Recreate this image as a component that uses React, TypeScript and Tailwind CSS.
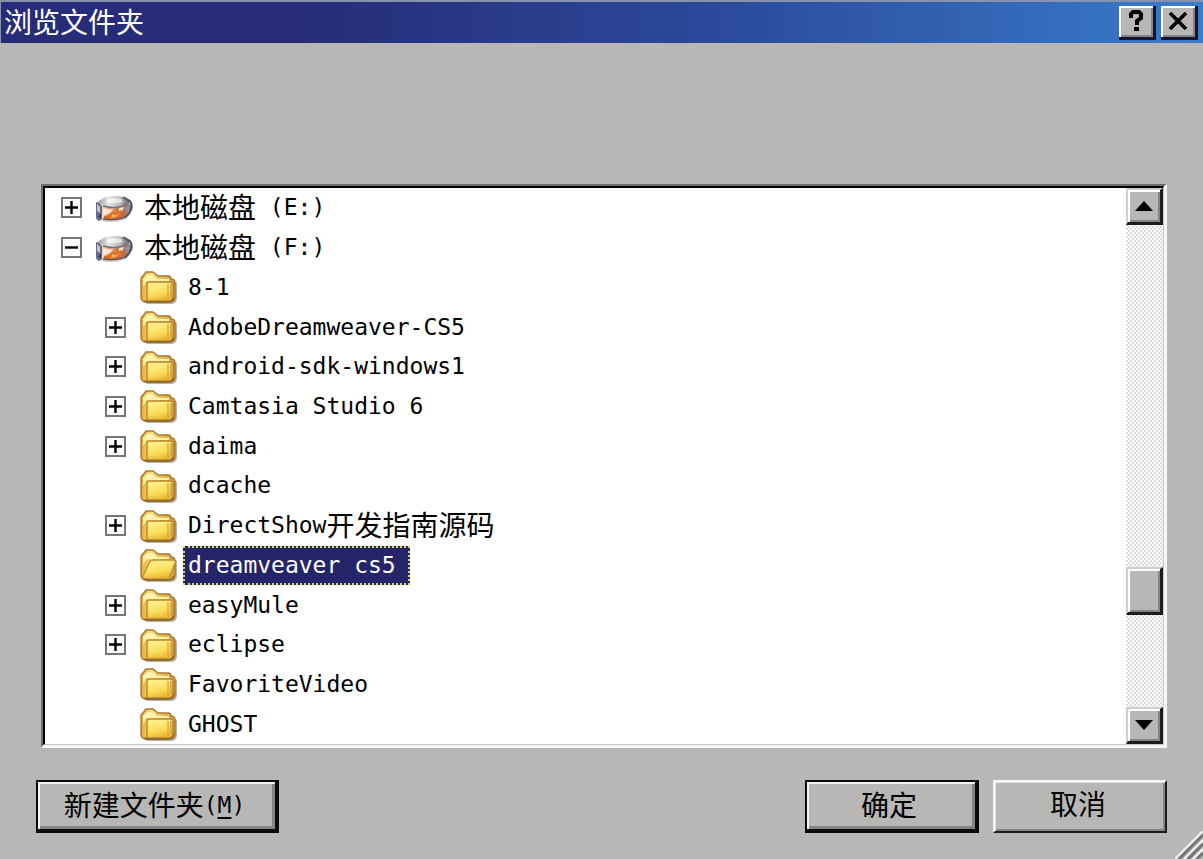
import React, { useState } from 'react';
import clsx from 'clsx';

type NodeKind = 'drive' | 'folder';

interface TreeNode {
  id: string;
  label: string;
  kind: NodeKind;
  level: 0 | 1;
  toggle?: 'plus' | 'minus';
}

const nodes: TreeNode[] = [
  { id: 'e', label: '本地磁盘 (E:)', kind: 'drive', level: 0, toggle: 'plus' },
  { id: 'f', label: '本地磁盘 (F:)', kind: 'drive', level: 0, toggle: 'minus' },
  { id: '8-1', label: '8-1', kind: 'folder', level: 1 },
  { id: 'adobe', label: 'AdobeDreamweaver-CS5', kind: 'folder', level: 1, toggle: 'plus' },
  { id: 'android', label: 'android-sdk-windows1', kind: 'folder', level: 1, toggle: 'plus' },
  { id: 'camtasia', label: 'Camtasia Studio 6', kind: 'folder', level: 1, toggle: 'plus' },
  { id: 'daima', label: 'daima', kind: 'folder', level: 1, toggle: 'plus' },
  { id: 'dcache', label: 'dcache', kind: 'folder', level: 1 },
  { id: 'directshow', label: 'DirectShow开发指南源码', kind: 'folder', level: 1, toggle: 'plus' },
  { id: 'dw', label: 'dreamveaver cs5', kind: 'folder', level: 1 },
  { id: 'easymule', label: 'easyMule', kind: 'folder', level: 1, toggle: 'plus' },
  { id: 'eclipse', label: 'eclipse', kind: 'folder', level: 1, toggle: 'plus' },
  { id: 'favorite', label: 'FavoriteVideo', kind: 'folder', level: 1 },
  { id: 'ghost', label: 'GHOST', kind: 'folder', level: 1 },
];

// Chinese glyphs are two latin cells wide, so the two scripts get their own size
const MixedText = ({ text }: { text: string }) => (
  <>
    {text.split(/([\u4e00-\u9fff]+)/).filter(Boolean).map((part, i) => (
      <span
        key={i}
        className={
          /[\u4e00-\u9fff]/.test(part)
            ? "pb-1 font-['Noto_Sans_CJK_SC',sans-serif] text-[28px] leading-none"
            : "font-['DejaVu_Sans_Mono',monospace] text-[23px] leading-none"
        }
      >
        {part}
      </span>
    ))}
  </>
);

const DriveIcon = () => (
  <svg width="38" height="34" viewBox="0 0 38 34" aria-hidden="true">
    <defs>
      <linearGradient id="driveTop" x1="0" y1="0" x2="1" y2="0">
        <stop offset="0" stopColor="#9a9aa0" />
        <stop offset=".35" stopColor="#e6e6e6" />
        <stop offset=".7" stopColor="#b8b8ba" />
        <stop offset="1" stopColor="#5c5c60" />
      </linearGradient>
      <linearGradient id="driveFront" x1="0" y1="0" x2="1" y2="0">
        <stop offset="0" stopColor="#f3d3b8" />
        <stop offset=".4" stopColor="#df8242" />
        <stop offset=".75" stopColor="#b86e48" />
        <stop offset="1" stopColor="#77758c" />
      </linearGradient>
    </defs>
    <path d="M3 27h23l10-6-5 7-8 3H8z" fill="#999" opacity=".4" />
    <path d="M6 15q10 4 20 1l11-4-1 8q-2 6-9 8l-19 1z" fill="url(#driveFront)" />
    <path d="M8 17q6 2 11 1l-4 4-7 3z" fill="#fff3e8" opacity=".8" />
    <path d="M9 25q4 0 8-4l4 1 6-3 2 2-5 5-8 3H9z" fill="#d96f22" />
    <path d="m17 23 4 1 4-2-4 4-5 1z" fill="#f7ab67" />
    <path d="M30 16l5-2-1 6-3 3z" fill="#8b8fab" />
    <path d="m24 17 5-1-1 3-4 1z" fill="#f7e4d8" />
    <path d="M2 11 10 6q9-2 18 0l7 4q0 3-7 5-10 2-18 1z" fill="url(#driveTop)" />
    <path d="M12 8q8-2 14 0l2 3q-7 2-16 1z" fill="#fff" opacity=".6" />
    <path d="M8 15q10 3 20 0l6-3" fill="none" stroke="#77727a" strokeWidth="1.4" />
    <path d="M28 6l7 4q3 4 1 9-2 5-7 8" fill="none" stroke="#55515c" strokeWidth="2" />
    <path d="M8 28q10 2 20-1" fill="none" stroke="#70504c" strokeWidth="1.4" />
    <path d="M1 11q4 1 6 4v13l-3 2q-3-1-3-4z" fill="#666a84" />
    <path d="M2 13l3 3v6l-3-2z" fill="#c2c5d8" />
    <path d="M3 25l3-2v5z" fill="#34365a" />
  </svg>
);

const FolderIcon = ({ open }: { open?: boolean }) => (
  <svg width="38" height="34" viewBox="0 0 38 34" aria-hidden="true">
    <defs>
      <linearGradient id="folderFront" x1="0" y1="0" x2=".3" y2="1">
        <stop offset="0" stopColor="#fff08c" />
        <stop offset=".3" stopColor="#fdeb82" />
        <stop offset=".7" stopColor="#fadb55" />
        <stop offset="1" stopColor="#e9b73a" />
      </linearGradient>
      <linearGradient id="folderBack" x1="0" y1="0" x2="1" y2="0">
        <stop offset="0" stopColor="#e2a838" />
        <stop offset=".3" stopColor="#f8e184" />
        <stop offset="1" stopColor="#d69b32" />
      </linearGradient>
    </defs>
    <path d="M5 31q1 3 4 3h22q7 0 7-6V13l-3-2v20z" fill="#777" opacity=".55" />
    <path
      d="M2 9q0-2 2-3l3-4h7l5 4h10q3 0 3 3 4 0 4 4v13q0 6-5 6H7q-5 0-5-5z"
      fill="url(#folderBack)"
      stroke="#a97a30"
      strokeWidth="1.4"
    />
    <path d="M4 9 8 5h5l5 4h12v2H9q-3 0-3 3l-2 3z" fill="#fdf2ae" />
    {open ? (
      <path
        d="M10 15q1-3 4-3h20q3 0 2 3l-5 13q-1 3-4 3H7q-4 0-3-3z"
        fill="url(#folderFront)"
        stroke="#c5922e"
        strokeWidth="1.4"
      />
    ) : (
      <>
        <path
          d="M8 14q0-2 2-2h21q3 0 3 2v13q0 4-4 4H8z"
          fill="url(#folderFront)"
          stroke="#b98628"
          strokeWidth="1.4"
        />
        <path d="M29 14v15" stroke="#d9a73a" strokeWidth="1.4" />
        <path d="M32 14v14" stroke="#e2ac3c" strokeWidth="2" />
      </>
    )}
    <path d="M5 31q2 1 4 1h19q5 0 7-4" fill="none" stroke="#8d6728" strokeWidth="1.4" />
  </svg>
);

const bevel =
  'bg-[#b8b7b5] border-t-2 border-l-2 border-t-[#d0cfcd] border-l-[#d0cfcd] border-r-3 border-b-3 border-r-[#1c1c1c] border-b-[#1c1c1c] shadow-[inset_2px_2px_0_#fff,inset_-2px_-2px_0_#858483]';

const TitleButton = ({ label, children }: { label: string; children: React.ReactNode }) => (
  <button
    type="button"
    aria-label={label}
    className="flex h-[34px] w-[37px] items-center justify-center border-r-3 border-b-3 border-[#15152c] bg-[#b8b7b5] shadow-[inset_2px_2px_0_#fff,inset_-2px_-2px_0_#858483]"
  >
    {children}
  </button>
);

const ScrollButton = ({ label, path }: { label: string; path: string }) => (
  <button
    type="button"
    aria-label={label}
    className={clsx('flex h-[37px] shrink-0 items-center justify-center', bevel)}
  >
    <svg width="18" height="10" viewBox="0 0 18 10" aria-hidden="true">
      <path d={path} fill="#000" />
    </svg>
  </button>
);

interface DialogButtonProps {
  children: React.ReactNode;
  framed?: boolean;
  className?: string;
}

const DialogButton = ({ children, framed, className }: DialogButtonProps) => (
  <button
    type="button"
    className={clsx(
      'flex h-[53px] items-center justify-center whitespace-nowrap leading-none',
      framed
        ? 'border-2 border-r-4 border-b-4 border-[#0a0a0a] pr-1 shadow-[inset_2px_2px_0_#f4f4f4,inset_-3px_-3px_0_#858483]'
        : 'border-t-2 border-l-2 border-t-[#f8f8f8] border-l-[#f8f8f8] border-r-2 border-b-2 border-r-[#1c1c1c] border-b-[#1c1c1c] pr-1 pb-[3px] shadow-[inset_1px_1px_0_#e4e4e4,inset_-2px_-2px_0_#858483]',
      className
    )}
  >
    {children}
  </button>
);

const App = () => {
  const [selected, setSelected] = useState('dw');

  return (
    <div className="relative flex min-h-screen flex-col bg-[#b8b7b5] text-black">
      {/* Title bar */}
      <header className="flex h-[43px] items-center justify-between border-t-2 border-l-1 border-[#8792ad] bg-linear-to-r from-[#262c78] from-25% via-[#2c4a9c] via-60% to-[#3a7ccb] pr-[5px] pl-[3px]">
        <h1 className="pb-1 font-['Noto_Sans_CJK_SC',sans-serif] text-[28px] leading-none text-white">
          浏览文件夹
        </h1>
        <div className="flex gap-[5px]">
          <TitleButton label="帮助">
            <svg width="16" height="22" viewBox="0 0 16 22" aria-hidden="true">
              <path d="M3 8V4l2-2h6l2 2v4l-4 3v4" fill="none" stroke="#000" strokeWidth="4" />
              <path d="M6 17h5v4H6z" />
            </svg>
          </TitleButton>
          <TitleButton label="关闭">
            <svg width="20" height="18" viewBox="0 0 20 18" aria-hidden="true">
              <path d="m2 1 16 16M18 1 2 17" stroke="#000" strokeWidth="3.6" />
            </svg>
          </TitleButton>
        </div>
      </header>

      <main className="flex flex-1 flex-col px-9 pt-[141px] pb-[26px]">
        {/* Folder tree */}
        <div className="ml-[5px] flex flex-1 border-t-2 border-l-2 border-r-3 border-b-3 border-t-[#6e6e6e] border-l-[#6e6e6e] border-r-[#f6f6f6] border-b-[#f6f6f6]">
          <div className="flex flex-1 border-t-2 border-l-2 border-r-1 border-b-1 border-t-black border-l-black border-r-[#c8c8c8] border-b-[#c8c8c8] bg-white">
            <ul role="tree" aria-label="文件夹" className="flex flex-1 flex-col">
              {nodes.map((node) => (
                <li
                  key={node.id}
                  role="treeitem"
                  aria-selected={selected === node.id}
                  onClick={() => setSelected(node.id)}
                  className={clsx(
                    'flex flex-1 items-center',
                    node.level === 0 ? 'pl-4' : 'pl-[60px]'
                  )}
                >
                  {node.toggle ? (
                    <button
                      type="button"
                      aria-label={node.toggle === 'plus' ? '展开' : '折叠'}
                      className="flex size-[21px] items-center justify-center border-2 border-[#777]"
                    >
                      <svg width="13" height="13" viewBox="0 0 13 13" aria-hidden="true">
                        <path
                          d={node.toggle === 'plus' ? 'M0 6.5h13M6.5 0v13' : 'M0 6.5h13'}
                          stroke="#000"
                          strokeWidth="2.4"
                        />
                      </svg>
                    </button>
                  ) : (
                    <span className="w-[21px]" />
                  )}
                  <span className="mr-[6px] ml-[13px]">
                    {node.kind === 'drive' ? (
                      <DriveIcon />
                    ) : (
                      <FolderIcon open={selected === node.id} />
                    )}
                  </span>
                  <span
                    className={clsx(
                      'flex h-[39px] items-center border-2 pl-[3px] whitespace-pre',
                      selected === node.id
                        ? 'border-dotted border-[#d6d860] bg-[#24246a] pr-[12px] text-white'
                        : 'border-transparent'
                    )}
                  >
                    <MixedText text={node.label} />
                  </span>
                </li>
              ))}
            </ul>

            {/* Scrollbar */}
            <div className="flex w-[37px] flex-col bg-[repeating-conic-gradient(#fff_0_25%,#dcdcdc_0_50%)] bg-size-[4px_4px]">
              <ScrollButton label="向上滚动" path="M9 0l9 10H0z" />
              <div className="grow-[344]" />
              <div className={clsx('h-[48px]', bevel)} />
              <div className="grow-[92]" />
              <ScrollButton label="向下滚动" path="M0 0h18L9 10z" />
            </div>
          </div>
        </div>

        {/* Actions */}
        <div className="mt-8 flex justify-between">
          <DialogButton framed className="w-[243px]">
            <MixedText text="新建文件夹" />
            <span className="font-['DejaVu_Sans_Mono',monospace] text-[23px]">
              (<u className="decoration-2 underline-offset-4">M</u>)
            </span>
          </DialogButton>
          <div className="flex gap-[14px]">
            <DialogButton framed className="w-[174px]">
              <MixedText text="确定" />
            </DialogButton>
            <DialogButton className="w-[174px]">
              <MixedText text="取消" />
            </DialogButton>
          </div>
        </div>
      </main>

      {/* Resize grip */}
      <svg
        className="absolute right-0 bottom-0"
        width="28"
        height="28"
        viewBox="0 0 28 28"
        aria-hidden="true"
      >
        <path d="M0 28 28 0M9 28 28 9M18 28 28 18" stroke="#f4f4f4" strokeWidth="2" />
        <path d="M4 28 28 4M13 28 28 13M22 28 28 22" stroke="#777" strokeWidth="3" />
      </svg>
    </div>
  );
};

export default App;
